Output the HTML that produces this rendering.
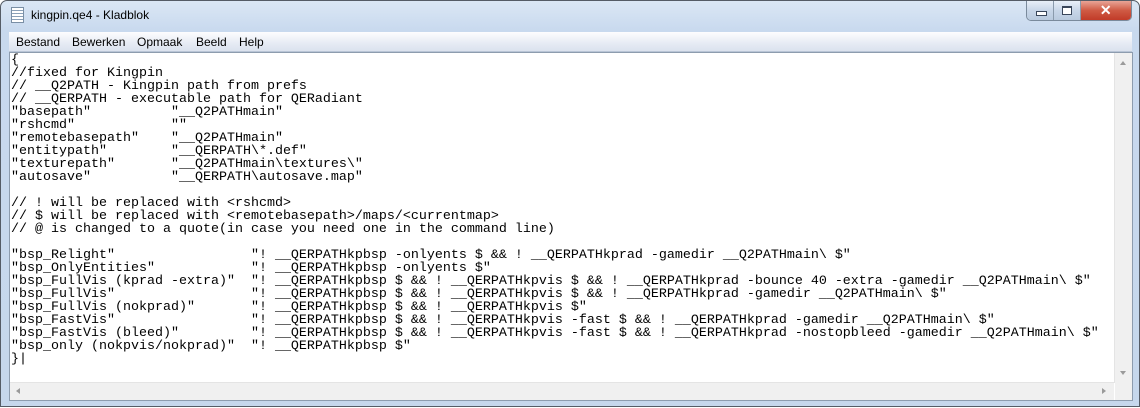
<!DOCTYPE html><html><head><style>
body{margin:0;width:1140px;height:408px;background:#fff;overflow:hidden;font-family:"Liberation Sans",sans-serif}
.win{position:absolute;left:0;top:0;width:1138px;height:405px;border:1px solid #555c66;border-radius:7px 7px 0 0;background:linear-gradient(#dbe7f5,#c8d9ee 30px,#c6d7ec);}
.title{position:absolute;left:30px;top:7px;font-size:12px;color:#000}
.icon{position:absolute;left:10px;top:6px;width:11px;height:14px;background:#fff;border:1px solid #7a8fa5;background-image:repeating-linear-gradient(#fff 0 2px,#8aa0b8 2px 3px)}
.btns{position:absolute;right:7px;top:0;height:19px;width:104px;border:1px solid #7a8a9c;border-top:none;border-radius:0 0 5px 5px;overflow:hidden;display:flex}
.b{height:19px;background:linear-gradient(#e8eff8,#c8d6e8 50%,#b9cade);border-right:1px solid #8a9aac;position:relative}
.x{background:linear-gradient(#e8a597,#cf5a44 50%,#c13b28);border:none}
.menu{position:absolute;left:8px;top:31px;width:1123px;height:19px;background:linear-gradient(#fdfdfe,#e6ebf4 60%,#dbe2ee);border-bottom:1px solid #b9c5d6}
.menu span{font-size:12px;position:absolute;top:3px}
.edit{position:absolute;left:8px;top:51px;width:1122px;height:347px;border:1px solid #8d9cae;background:#fff}
pre{margin:0;position:absolute;left:1px;top:1px;font-family:"Liberation Mono",monospace;font-size:13.33px;line-height:13px;color:#000}
.vs{position:absolute;right:0;top:0;width:17px;height:330px;background:#f0f0f0;border-left:1px solid #e4e4e4}
.hs{position:absolute;left:0;bottom:0;width:1104px;height:17px;background:#f0f0f0;border-top:1px solid #e4e4e4}
.corner{position:absolute;right:0;bottom:0;width:17px;height:17px;background:#f0f0f0}
</style></head><body>
<div class="win">
<div class="icon"></div>
<div class="title">kingpin.qe4 - Kladblok</div>
<div class="btns"><div class="b" style="width:26px"><div style="position:absolute;left:9px;top:10px;width:9px;height:3px;border:1px solid #39465a;background:#fff"></div></div><div class="b" style="width:26px"><div style="position:absolute;left:8px;top:5px;width:8px;height:6px;border:1px solid #39465a;border-top-width:2px;background:#fff"></div></div><div class="b x" style="width:51px;color:#fff;font-weight:bold;font-size:14px;text-align:center;line-height:18px">✕</div></div>
<div class="menu"><span style="left:7px">Bestand</span><span style="left:63px">Bewerken</span><span style="left:128px">Opmaak</span><span style="left:187px">Beeld</span><span style="left:230px">Help</span></div>
<div class="edit"><pre>{
//fixed for Kingpin
// __Q2PATH - Kingpin path from prefs
// __QERPATH - executable path for QERadiant
"basepath"          "__Q2PATHmain"
"rshcmd"            ""
"remotebasepath"    "__Q2PATHmain"
"entitypath"        "__QERPATH\*.def"
"texturepath"       "__Q2PATHmain\textures\"
"autosave"          "__QERPATH\autosave.map"

// ! will be replaced with &lt;rshcmd&gt;
// $ will be replaced with &lt;remotebasepath&gt;/maps/&lt;currentmap&gt;
// @ is changed to a quote(in case you need one in the command line)

"bsp_Relight"                 "! __QERPATHkpbsp -onlyents $ &amp;&amp; ! __QERPATHkprad -gamedir __Q2PATHmain\ $"
"bsp_OnlyEntities"            "! __QERPATHkpbsp -onlyents $"
"bsp_FullVis (kprad -extra)"  "! __QERPATHkpbsp $ &amp;&amp; ! __QERPATHkpvis $ &amp;&amp; ! __QERPATHkprad -bounce 40 -extra -gamedir __Q2PATHmain\ $"
"bsp_FullVis"                 "! __QERPATHkpbsp $ &amp;&amp; ! __QERPATHkpvis $ &amp;&amp; ! __QERPATHkprad -gamedir __Q2PATHmain\ $"
"bsp_FullVis (nokprad)"       "! __QERPATHkpbsp $ &amp;&amp; ! __QERPATHkpvis $"
"bsp_FastVis"                 "! __QERPATHkpbsp $ &amp;&amp; ! __QERPATHkpvis -fast $ &amp;&amp; ! __QERPATHkprad -gamedir __Q2PATHmain\ $"
"bsp_FastVis (bleed)"         "! __QERPATHkpbsp $ &amp;&amp; ! __QERPATHkpvis -fast $ &amp;&amp; ! __QERPATHkprad -nostopbleed -gamedir __Q2PATHmain\ $"
"bsp_only (nokpvis/nokprad)"  "! __QERPATHkpbsp $"
}|</pre>
<div class="vs"><div style="position:absolute;left:5px;top:8px;border:3px solid transparent;border-bottom:4px solid #9a9a9a;border-top:none"></div><div style="position:absolute;left:5px;bottom:8px;border:3px solid transparent;border-top:4px solid #9a9a9a;border-bottom:none"></div></div>
<div class="hs"><div style="position:absolute;left:6px;top:5px;border:3px solid transparent;border-right:4px solid #9a9a9a;border-left:none"></div><div style="position:absolute;right:8px;top:5px;border:3px solid transparent;border-left:4px solid #9a9a9a;border-right:none"></div></div>
<div class="corner"></div>
</div>
</div>
</body></html>
